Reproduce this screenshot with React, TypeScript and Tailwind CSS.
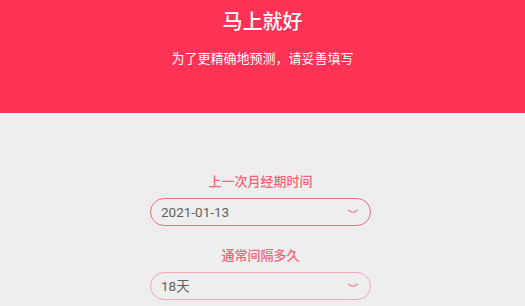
import React from "react";

function Chevron() {
  return (
    <svg viewBox="0 0 14 8" className="h-[6px] w-[12px]" fill="none" stroke="#f26a7c" strokeWidth="1.4">
      <path d="M1 1.5 Q7 7 13 1.5" strokeLinecap="round" />
    </svg>
  );
}

function Field({ label, value, faded }: { label: string; value: string; faded?: boolean }) {
  return (
    <div className="flex flex-col items-center">
      <div className="text-[13px] font-medium leading-[18px] text-[#f36479]">{label}</div>
      <div
        className={
          faded
            ? "mt-[7px] flex h-[28px] w-[221px] items-center justify-between rounded-full border border-[#f7a3b0] pl-[10px] pr-[11px]"
            : "mt-[7px] flex h-[28px] w-[221px] items-center justify-between rounded-full border border-[#f26a7c] pl-[10px] pr-[11px]"
        }
      >
        <span className="text-[13.5px] text-[#5f5f5f]">{value}</span>
        <Chevron />
      </div>
    </div>
  );
}

export default function App() {
  return (
    <div
      className="flex h-[306px] w-[525px] flex-col overflow-hidden bg-[#eeeeee]"
      style={{ fontFamily: 'Roboto, "Noto Sans CJK SC", sans-serif' }}
    >
      <div className="flex h-[113px] shrink-0 flex-col items-center bg-[#ff3355] pt-[7px] text-white">
        <div className="text-[20px] font-medium leading-[30px]">马上就好</div>
        <div className="mt-[13px] text-[13px] leading-[18px]">为了更精确地预测，请妥善填写</div>
      </div>
      <div className="flex flex-col items-center gap-[21px] pr-[4px] pt-[60px]">
        <Field label="上一次月经期时间" value="2021-01-13" />
        <Field label="通常间隔多久" value="18天" faded />
      </div>
    </div>
  );
}
